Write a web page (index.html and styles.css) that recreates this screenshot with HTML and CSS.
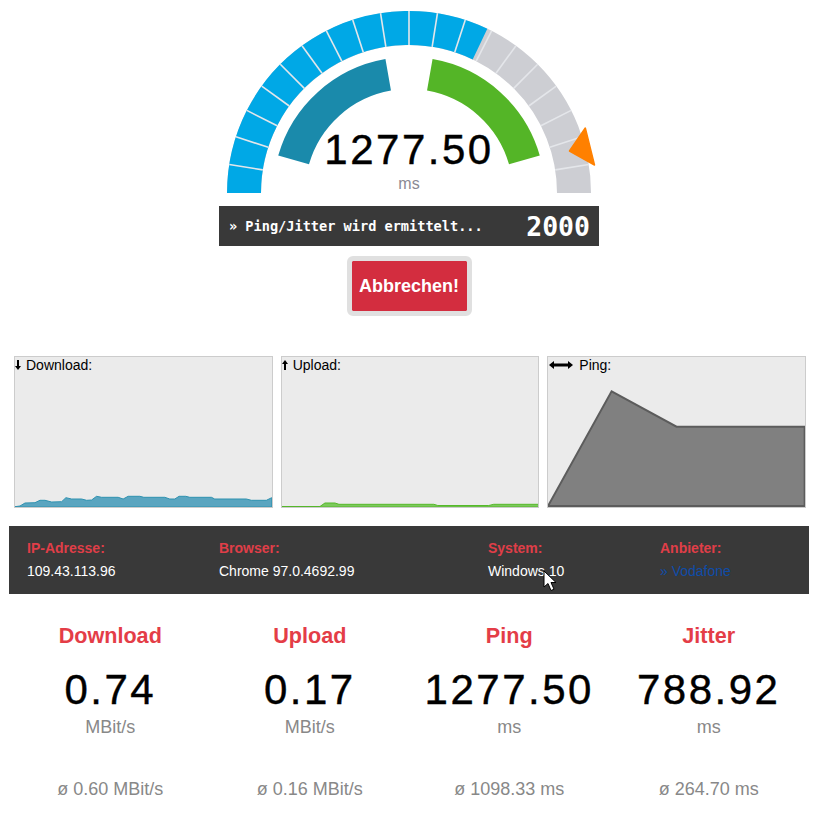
FILE: index.html
```html
<!DOCTYPE html>
<html lang="de">
  <head>
    <meta charset="UTF-8" />
    <meta name="viewport" content="width=device-width, initial-scale=1.0" />
    <title>Speedtest</title>
    <link rel="stylesheet" href="styles.css">
  </head>
  <body>
    <!-- Gauge -->
    <div class="gauge">
      <svg class="gauge-svg" width="400" height="206" viewBox="0 0 400 206">
        <path class="ring ring-rest" d="M35 193 A165 165 0 0 1 365 193" />
        <path class="ring ring-done" d="M35 193 A165 165 0 0 1 271 44.1" />
        <g class="ticks">
          <line x1="200" y1="11" x2="200" y2="45" transform="rotate(-81 200 193)" />
          <line x1="200" y1="11" x2="200" y2="45" transform="rotate(-72 200 193)" />
          <line x1="200" y1="11" x2="200" y2="45" transform="rotate(-63 200 193)" />
          <line x1="200" y1="11" x2="200" y2="45" transform="rotate(-54 200 193)" />
          <line x1="200" y1="11" x2="200" y2="45" transform="rotate(-45 200 193)" />
          <line x1="200" y1="11" x2="200" y2="45" transform="rotate(-36 200 193)" />
          <line x1="200" y1="11" x2="200" y2="45" transform="rotate(-27 200 193)" />
          <line x1="200" y1="11" x2="200" y2="45" transform="rotate(-18 200 193)" />
          <line x1="200" y1="11" x2="200" y2="45" transform="rotate(-9 200 193)" />
          <line x1="200" y1="11" x2="200" y2="45" />
          <line x1="200" y1="11" x2="200" y2="45" transform="rotate(9 200 193)" />
          <line x1="200" y1="11" x2="200" y2="45" transform="rotate(18 200 193)" />
          <line x1="200" y1="11" x2="200" y2="45" transform="rotate(27 200 193)" />
          <line x1="200" y1="11" x2="200" y2="45" transform="rotate(36 200 193)" />
          <line x1="200" y1="11" x2="200" y2="45" transform="rotate(45 200 193)" />
          <line x1="200" y1="11" x2="200" y2="45" transform="rotate(54 200 193)" />
          <line x1="200" y1="11" x2="200" y2="45" transform="rotate(63 200 193)" />
          <line x1="200" y1="11" x2="200" y2="45" transform="rotate(72 200 193)" />
          <line x1="200" y1="11" x2="200" y2="45" transform="rotate(81 200 193)" />
        </g>
        <path class="arc arc-down" d="M84.6 159.9 A120 120 0 0 1 179.2 74.8" />
        <path class="arc arc-up" d="M220.8 74.8 A120 120 0 0 1 315.4 159.9" />
        <polygon class="needle" points="376.3,128 385.5,165 360.5,151" />
      </svg>
      <div class="gauge-readout">
        <div class="lcd">1277.50</div>
        <div class="gauge-unit">ms</div>
      </div>
    </div>

    <div class="status">
      <span class="status-text">» Ping/Jitter wird ermittelt...</span>
      <span class="status-count">2000</span>
    </div>

    <div class="actions">
      <button type="button" class="cancel">Abbrechen!</button>
    </div>

    <!-- Charts -->
    <div class="charts">
      <div class="chart">
        <div class="chart-label">
          <svg class="icon-v" width="6" height="10" viewBox="0 0 6 10"><path d="M2 0h2v6h2l-3 4-3-4h2z" /></svg>
          <span>Download:</span>
        </div>
        <svg class="plot" viewBox="0 0 257 150" preserveAspectRatio="none">
          <path class="plot-down" d="M0 149.7 5 149 10 146 20 145.7 25 143.3 30 143.3 36.7 145 46.7 144.7 51 140.7 56.7 142 66.7 142 71.7 143.3 76.7 143 81.7 139.3 86.7 140.3 103.3 140.3 108.3 142 113.3 139.3 125 139.3 129 140.3 150 140.3 155 142 160 142 164.3 139.3 171 139.3 175 140.3 196.7 140.3 200 142 231.7 142 236.7 143.3 251.7 143.3 257 140.7V150H0z" />
        </svg>
      </div>
      <div class="chart">
        <div class="chart-label">
          <svg class="icon-v" width="6" height="10" viewBox="0 0 6 10"><path d="M3 0l3 4H4v6H2V4H0z" /></svg>
          <span>Upload:</span>
        </div>
        <svg class="plot" viewBox="0 0 257 150" preserveAspectRatio="none">
          <path class="plot-up" d="M0 149.5 38 149.5 43 146 53 146 57 147.3 152 147.3 156 148.5 207 148.5 212 147.3 257 147.3V150H0z" />
        </svg>
      </div>
      <div class="chart">
        <div class="chart-label chart-label-wide">
          <svg class="icon-h" width="24" height="8" viewBox="0 0 24 8"><path d="M0 4l5-4v2.500h14V0l5 4-5 4V5.500H5V8z" /></svg>
          <span>Ping:</span>
        </div>
        <svg class="plot" viewBox="0 0 257 150" preserveAspectRatio="none">
          <path class="plot-ping" d="M0 149 63.7 34.300 128.700 69.700H257V149z" />
        </svg>
      </div>
    </div>

    <!-- Connection info -->
    <div class="info">
      <div>
        <div class="info-label">IP-Adresse:</div>
        <div class="info-value">109.43.113.96</div>
      </div>
      <div>
        <div class="info-label">Browser:</div>
        <div class="info-value">Chrome 97.0.4692.99</div>
      </div>
      <div>
        <div class="info-label">System:</div>
        <div class="info-value">Windows 10</div>
      </div>
      <div>
        <div class="info-label">Anbieter:</div>
        <a class="info-link" href="#">» Vodafone</a>
      </div>
      <svg class="cursor" width="14" height="22" viewBox="0 0 14 22">
        <path d="M1 1v16l4-3.500 3 7 3-1.300-3-6.700h5z" />
      </svg>
    </div>

    <!-- Results -->
    <div class="results">
      <div class="result">
        <div class="result-title">Download</div>
        <div class="lcd">0.74</div>
        <div class="result-unit">MBit/s</div>
        <div class="result-avg">ø 0.60 MBit/s</div>
      </div>
      <div class="result">
        <div class="result-title">Upload</div>
        <div class="lcd">0.17</div>
        <div class="result-unit">MBit/s</div>
        <div class="result-avg">ø 0.16 MBit/s</div>
      </div>
      <div class="result">
        <div class="result-title">Ping</div>
        <div class="lcd">1277.50</div>
        <div class="result-unit">ms</div>
        <div class="result-avg">ø 1098.33 ms</div>
      </div>
      <div class="result">
        <div class="result-title">Jitter</div>
        <div class="lcd">788.92</div>
        <div class="result-unit">ms</div>
        <div class="result-avg">ø 264.70 ms</div>
      </div>
    </div>
  </body>
</html>
```

FILE: styles.css
```css
body {
  font-family: "Liberation Sans", Arial, sans-serif;
  margin: 0;
  background-color: #fff;
  color: #000;
}

.gauge {
  position: relative;
  width: 400px;
  height: 206px;
  margin-left: 209px;
}

.gauge-svg {
  display: block;
}

.ring {
  fill: none;
  stroke-width: 34;
}

.ring-rest {
  stroke: #cdced3;
}

.ring-done {
  stroke: #00a8e6;
}

.ticks line {
  stroke: #e4e6ea;
  stroke-width: 1.600;
}

.arc {
  fill: none;
  stroke-width: 32;
}

.arc-down {
  stroke: #1a8aab;
}

.arc-up {
  stroke: #54b527;
}

.needle {
  fill: #ff8000;
  stroke: #ff8000;
  stroke-width: 1.500;
  stroke-linejoin: round;
}

.gauge-readout {
  position: absolute;
  left: 0;
  right: 0;
  top: 126px;
  text-align: center;
}

.lcd {
  font-size: 42px;
  line-height: 48px;
  letter-spacing: 2.500px;
  color: #000;
  -webkit-text-stroke: 0.400px #000;
}

.gauge-readout .lcd {
  margin-bottom: 1px;
}

.gauge-unit {
  font-size: 16px;
  line-height: 18px;
  color: #8a8a94;
}

.status {
  display: flex;
  justify-content: space-between;
  align-items: center;
  box-sizing: border-box;
  width: 380px;
  height: 40px;
  margin-left: 219px;
  padding: 0 9px 0 10px;
  background-color: #393939;
  color: #fff;
  font-family: "DejaVu Sans Mono", monospace;
  font-weight: bold;
}

.status-text {
  font-size: 13.600px;
}

.status-count {
  font-size: 26.500px;
}

.actions {
  display: flex;
  justify-content: center;
  width: 380px;
  margin: 10px 0 40px 219px;
}

.cancel {
  box-sizing: border-box;
  width: 125px;
  height: 60px;
  padding: 0;
  border: 5px solid #e0e0e0;
  border-radius: 6px;
  background-color: #d32d3f;
  background-clip: padding-box;
  color: #fff;
  font-family: "Liberation Sans", Arial, sans-serif;
  font-size: 18px;
  font-weight: bold;
  cursor: pointer;
}

.charts {
  display: grid;
  grid-template-columns: repeat(3, 1fr);
  gap: 8px;
  width: 792px;
  margin-left: 14px;
}

.chart {
  position: relative;
  box-sizing: border-box;
  height: 152px;
  border: 1px solid #ccc;
  background-color: #ebebeb;
}

.chart-label {
  position: absolute;
  top: 0;
  left: 0;
  display: flex;
  align-items: center;
  gap: 5px;
  font-size: 14px;
  line-height: 16px;
}

.chart-label-wide {
  gap: 6px;
  left: 1px;
}

.icon-v,
.icon-h {
  display: block;
  fill: #000;
}

.plot {
  display: block;
  width: 100%;
  height: 100%;
}

.plot-down {
  fill: #5aa5c0;
  stroke: #2f92b0;
  stroke-width: 1;
}

.plot-up {
  fill: #7cc95c;
  stroke: #55b82a;
  stroke-width: 1;
}

.plot-ping {
  fill: #808080;
  stroke: #5c5c5c;
  stroke-width: 2;
}

.info {
  position: relative;
  display: grid;
  grid-template-columns: 192px 269px 172px 1fr;
  box-sizing: border-box;
  width: 800px;
  height: 68px;
  margin: 18px 0 0 9px;
  padding: 14px 18px 0;
  background-color: #393939;
  font-size: 14px;
  line-height: 16px;
}

.info-label {
  margin-bottom: 7px;
  color: #e03e48;
  font-weight: bold;
}

.info-value {
  color: #fff;
}

.info-link {
  color: #0f4ca8;
  text-decoration: none;
}

.cursor {
  position: absolute;
  left: 534px;
  top: 44px;
}

.cursor path {
  fill: #fff;
  stroke: #000;
  stroke-width: 1;
}

.results {
  display: grid;
  grid-template-columns: repeat(4, 1fr);
  width: 798px;
  margin: 29px 0 0 10.500px;
  text-align: center;
}

.result-title {
  color: #e43d47;
  font-size: 21.600px;
  font-weight: bold;
  line-height: 26px;
}

.result .lcd {
  margin: 17px 0 2px;
}

.result-unit {
  color: #888;
  font-size: 18px;
  line-height: 22px;
}

.result-avg {
  margin-top: 40px;
  color: #888;
  font-size: 18px;
  line-height: 22px;
}
```
